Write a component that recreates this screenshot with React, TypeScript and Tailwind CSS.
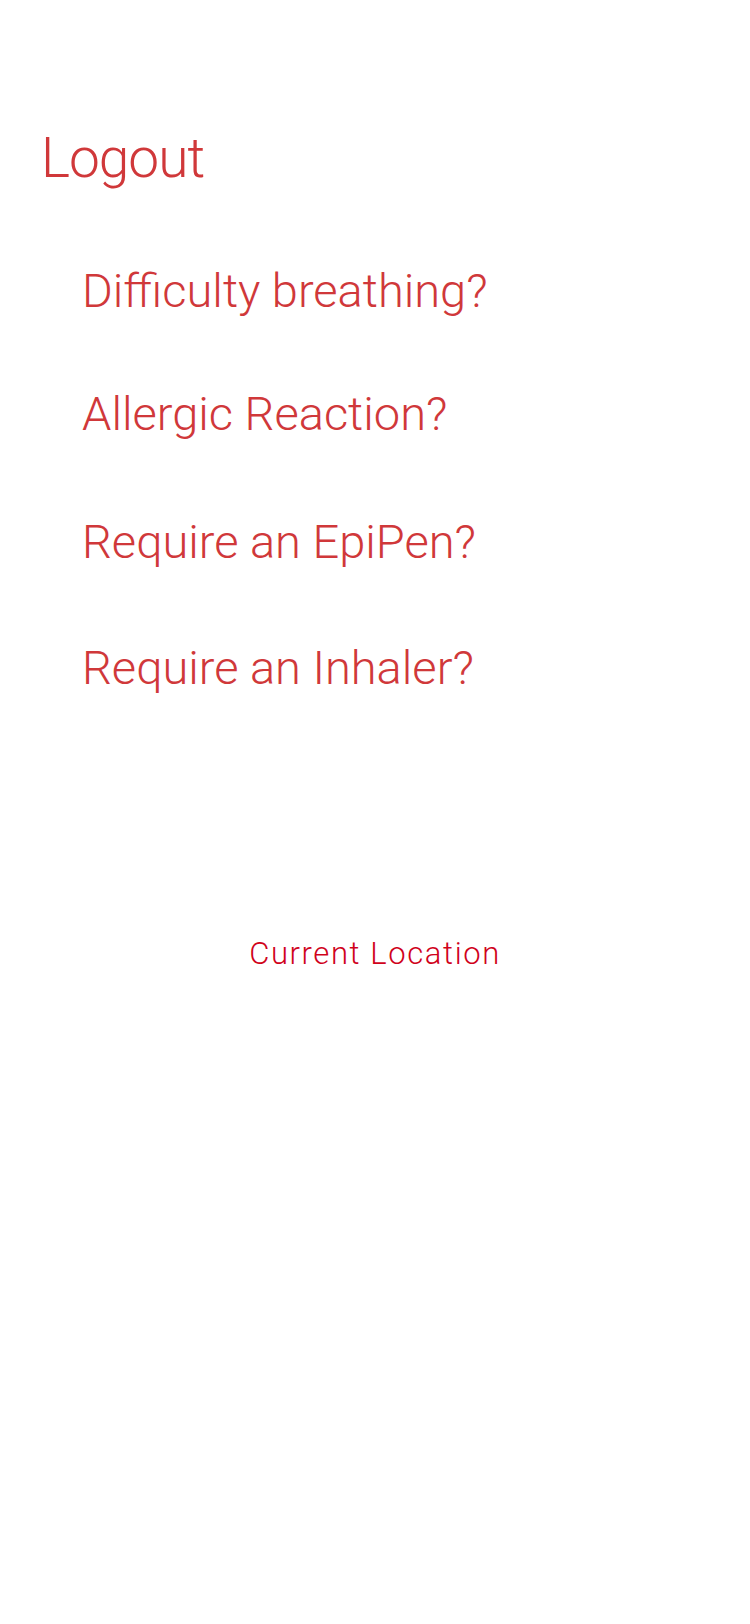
import React from "react";

export default function App() {
  const font = { fontFamily: "Roboto, 'Noto Sans', sans-serif" };
  return (
    <div className="w-[750px] h-[1624px] bg-white flex flex-col font-light" style={font}>
      <div className="mt-[126px] pl-[41px] text-[55px] leading-[64px] text-[#d0383a] tracking-[-1px]">Logout</div>
      <div className="mt-[73px] pl-[82px] flex flex-col text-[47px] leading-[56px] text-[#d0383a]">
        <div>Difficulty breathing?</div>
        <div className="mt-[67px]">Allergic Reaction?</div>
        <div className="mt-[72px]">Require an EpiPen?</div>
        <div className="mt-[70px]">Require an Inhaler?</div>
      </div>
      <div className="mt-[240px] text-center text-[31px] leading-[36px] text-[#d0021b] tracking-[1.6px]">Current Location</div>
    </div>
  );
}
